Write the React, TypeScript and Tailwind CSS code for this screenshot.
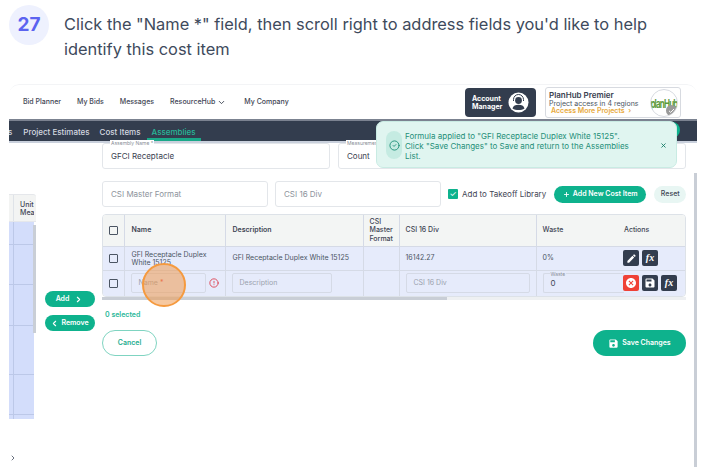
import { ChevronDown, ChevronLeft, ChevronRight, CircleAlert, CircleCheck, Plus, X } from "lucide-react";
import { MdCancel, MdEdit, MdSave } from "react-icons/md";

const leftRows = ["h-[23px]", "h-[40px]", "h-[41px]", "h-[49px]", "h-[40px]", "h-[4px]"];

function Field({ label, value, placeholder, className }: { label?: string; value?: string; placeholder?: string; className: string }) {
  return (
    <div className={`relative flex items-center border border-[#e3e6ea] rounded-[3px] bg-white pl-2 text-[8px] ${className}`}>
      {label && <span className="absolute left-[7px] -top-[4px] bg-white px-px text-[5px] leading-[7px] text-[#8a8f98]">{label}</span>}
      <span className={value ? "text-[#3a4150]" : "text-[#8d939c]"}>{value ?? placeholder}</span>
    </div>
  );
}

function Placeholder({ children, className }: { children: React.ReactNode; className: string }) {
  return (
    <div className={`flex items-center h-[20px] pl-[7px] border border-[#d5dae6] rounded-[2px] text-[7px] text-[#9aa1ad] ${className}`}>{children}</div>
  );
}

function Square({ className = "" }: { className?: string }) {
  return <div className={`w-[9px] h-[9px] mx-auto border border-[#4b5563] rounded-[1px] ${className}`} />;
}

function ActionBtn({ children, red }: { children: React.ReactNode; red?: boolean }) {
  return (
    <div className={`flex items-center justify-center w-[16px] h-[16px] rounded-[2px] text-white ${red ? "bg-[#ef4136]" : "bg-[#333d4e]"}`}>
      {children}
    </div>
  );
}

function Fx() {
  return <span className="font-['Liberation_Serif',serif] italic font-bold text-[10px] leading-none">fx</span>;
}

export default function App() {
  return (
    <div className="relative w-[707px] h-[475px] overflow-hidden bg-white font-['Inter',sans-serif]">
      <div className="flex h-[84px] pt-[5px] pl-[9px]">
        <div className="flex items-center justify-center w-[40px] h-[40px] rounded-full bg-[#eef1fe] text-[19px] font-bold text-[#5b63f0] shrink-0">27</div>
        <p className="ml-[15px] mt-[7px] w-[600px] text-[16.4px] leading-[25px] text-[#3e4a5c]">
          Click the "Name *" field, then scroll right to address fields you'd like to help identify this cost item
        </p>
      </div>

      <div className="relative ml-[9px] w-[688px] h-[383px] rounded-t-[10px] overflow-hidden">
        <div className="flex items-center h-[35px] pl-[14px] pr-[16px] border-t border-[#f3f4f6] rounded-t-[10px]">
          <div className="flex items-center pt-[1px] text-[7px] font-medium text-[#3f4654]">
            <span>Bid Planner</span>
            <span className="ml-[16px]">My Bids</span>
            <span className="ml-[16px]">Messages</span>
            <span className="ml-[16px] flex items-center gap-[2px]">ResourceHub <ChevronDown size={9} strokeWidth={2.5} /></span>
            <span className="ml-[18px]">My Company</span>
          </div>
          <div className="ml-auto flex items-center h-[29px] w-[71px] mt-[1px] pl-[7px] gap-[6px] rounded-[4px] bg-[#333d4e] text-white">
            <span className="text-[7px] leading-[8px] font-bold">Account<br />Manager</span>
            <svg width="21" height="21" viewBox="0 0 21 21" className="shrink-0">
              <circle cx="10.5" cy="10.5" r="10" fill="#fff" />
              <circle cx="10.5" cy="8.5" r="3.4" fill="#333d4e" />
              <path d="M5.500 9V7.500a5 5 0 0 1 10 0V9" fill="none" stroke="#333d4e" strokeWidth="1" />
              <path d="M4.500 16.500c.6-2.800 3-3.800 6-3.800s5.400 1 6 3.800c-3.200 2-8.800 2-12 0z" fill="#333d4e" />
            </svg>
          </div>
          <div className="relative flex items-center ml-[9px] w-[136px] h-[31px] pl-[3px] mt-[1px] border border-[#d7dae0] rounded-[3px]">
            <div className="flex flex-col">
              <span className="text-[8px] leading-[9px] font-semibold text-[#3a4150]">PlanHub Premier</span>
              <span className="text-[7px] leading-[7.500px] text-[#4b5563]">Project access in 4 regions</span>
              <span className="pl-[2px] text-[7px] leading-[7.500px] font-semibold text-[#e7a93c]">Access More Projects &nbsp;›</span>
            </div>
            <div className="relative ml-auto mr-[2px] flex items-center justify-center w-[28px] h-[28px] rounded-full border border-[#d7dae0] overflow-hidden">
              <span className="text-[8px] leading-none font-bold tracking-[-0.8px] scale-y-150 text-[#5c9a3c]">planHub</span>
              <svg width="11" height="11" viewBox="0 0 11 11" className="absolute right-0 bottom-0">
                <circle cx="5.5" cy="5.5" r="5.5" fill="#9a9a9a" />
                <path d="M3 5.800l1.700 1.600L8 4" fill="none" stroke="#fff" strokeWidth="1" />
              </svg>
            </div>
          </div>
        </div>

        <div className="flex items-end h-[22px] border-t-2 border-[#7b8290] bg-[#333d4e] text-[8px] font-medium text-[#d5d9e0]">
          <span className="pb-[3px] -ml-[1px] text-[8px]">s</span>
          <span className="pb-[3px] ml-[11px]">Project Estimates</span>
          <span className="pb-[3px] ml-[10px]">Cost Items</span>
          <span className="ml-[6px] h-[19px] px-[5px] flex items-center pt-[3px] border-b-[3px] border-[#1aa888] text-[#27b899]">Assemblies</span>
          <span className="ml-auto mr-[17px] mb-[3px] w-[10px] h-[16px] rounded-r-full bg-[#0eb28d]" />
        </div>

        <div className="flex h-[326px] border-t-2 border-[#c9d0dc]">
          <div className="relative w-[27px] shrink-0 pt-[51px]">
            <div className="flex h-[28px] rounded-tr-[3px] border-y border-[#e5e7eb] bg-[#f3f4f3]">
              <div className="w-[5px] border-r border-[#dfe3e8]" />
              <span className="pl-[6px] pt-[6px] w-[20px] overflow-hidden whitespace-nowrap text-[7px] leading-[8px] font-medium text-[#3f4654]">Unit<br />Mea</span>
            </div>
            {leftRows.map((h, i) => (
              <div key={i} className={`flex ${h} bg-[#d3ddfb] ${i < 5 ? "border-b border-[#bcc8e8]" : ""} w-[25px]`}>
                <div className="w-[5px] border-r border-[#bcc8e8]" />
              </div>
            ))}
            <div className="absolute right-0 top-[82px] w-[3px] h-[108px] bg-[#c9ced6]" />
            <ChevronRight size={8} className="absolute left-0 bottom-[5px] text-[#6b7280]" strokeWidth={3} />
          </div>

          <div className="flex flex-col w-[66px] shrink-0 items-center pt-[148px] gap-[8px] pl-[1px]">
            <div className="flex items-center justify-center gap-[5px] w-[50px] h-[16px] rounded-full bg-[#0eb28d] text-white text-[7px] font-semibold">Add <ChevronRight size={9} strokeWidth={3} /></div>
            <div className="flex items-center justify-center gap-[2px] w-[50px] h-[16px] rounded-full bg-[#0eb28d] text-white text-[7px] font-semibold"><ChevronLeft size={9} strokeWidth={3} /> Remove</div>
          </div>

          <div className="w-[584px] shrink-0">
            <div className="flex gap-[8px] h-[26px]">
              <Field label="Assembly Name *" value="GFCI Receptacle" className="w-[228px]" />
              <Field label="Measurement" value="Count" className="w-[348px]" />
            </div>
            <div className="flex items-center mt-[12px] h-[26px]">
              <Field placeholder="CSI Master Format" className="w-[166px] h-[26px] shrink-0" />
              <Field placeholder="CSI 16 Div" className="w-[166px] h-[26px] ml-[7px] shrink-0" />
              <div className="ml-[7px] flex items-center justify-center w-[10px] h-[10px] rounded-[1px] bg-[#0eb28d] text-white text-[8px] leading-none shrink-0">✓</div>
              <span className="ml-[4px] whitespace-nowrap text-[8px] text-[#3f4654]">Add to Takeoff Library</span>
              <div className="ml-[8px] flex items-center justify-center gap-[3px] w-[92px] h-[17px] rounded-full bg-[#0eb28d] text-white text-[7px] font-semibold shrink-0"><Plus size={7} strokeWidth={3} /> Add New Cost Item</div>
              <div className="ml-[8px] flex items-center justify-center w-[32px] h-[17px] rounded-full bg-[#e8f6f3] text-[7px] font-medium text-[#3f4654] shrink-0">Reset</div>
            </div>

            <div className="mt-[7px] rounded-[4px] border border-[#dde2e8] overflow-hidden">
              <table className="w-[582px] table-fixed border-collapse text-[7px] text-[#4b5563]">
                <colgroup>
                  <col className="w-[21px]" />
                  <col className="w-[101px]" />
                  <col className="w-[138px]" />
                  <col className="w-[36px]" />
                  <col className="w-[137px]" />
                  <col className="w-[88px]" />
                  <col className="w-[61px]" />
                </colgroup>
                <thead>
                  <tr className="h-[31px] bg-[#f3f5f4] text-left font-semibold text-[#3f4654] border-b border-[#d5dae6]">
                    <th className="border-r border-[#d5dae6]"><Square /></th>
                    <th className="pl-[7px] font-semibold border-r border-[#d5dae6]">Name</th>
                    <th className="pl-[7px] font-semibold border-r border-[#d5dae6]">Description</th>
                    <th className="pl-[6px] font-medium leading-[8.500px] border-r border-[#d5dae6]">CSI Master Format</th>
                    <th className="pl-[6px] font-medium border-r border-[#d5dae6]">CSI 16 Div</th>
                    <th className="pl-[6px] font-medium">Waste</th>
                    <th className="font-medium">Actions</th>
                  </tr>
                </thead>
                <tbody className="bg-[#e6ebfb]">
                  <tr className="h-[24px] border-b border-[#d5dae6]">
                    <td className="border-r border-[#d5dae6]"><Square /></td>
                    <td className="pl-[7px] leading-[8.300px] border-r border-[#d5dae6]"><div className="h-[22px] pt-[4px] overflow-visible">GFI Receptacle Duplex White 15125</div></td>
                    <td className="pl-[7px] border-r border-[#d5dae6]">GFI Receptacle Duplex White 15125</td>
                    <td className="border-r border-[#d5dae6]" />
                    <td className="pl-[6px] border-r border-[#d5dae6]">16142.27</td>
                    <td className="pl-[6px]">0%</td>
                    <td>
                      <div className="flex gap-[3px] -ml-px">
                        <ActionBtn><MdEdit size={11} /></ActionBtn>
                        <ActionBtn><Fx /></ActionBtn>
                      </div>
                    </td>
                  </tr>
                  <tr className="h-[26px]">
                    <td className="border-r border-[#d5dae6]"><Square /></td>
                    <td className="pl-[6px] border-r border-[#d5dae6]">
                      <div className="flex items-center gap-[3px]">
                        <Placeholder className="w-[75px]">Name&nbsp;<span className="text-[#e5484d]">*</span></Placeholder>
                        <CircleAlert size={10} className="text-[#dc3545]" />
                      </div>
                    </td>
                    <td className="pl-[6px] border-r border-[#d5dae6]"><Placeholder className="w-[100px]">Description</Placeholder></td>
                    <td className="border-r border-[#d5dae6]" />
                    <td className="pl-[6px] border-r border-[#d5dae6]"><Placeholder className="w-[124px]">CSI 16 Div</Placeholder></td>
                    <td className="pl-[6px]">
                      <div className="relative flex items-center h-[20px] pl-[7px] border-y border-l border-[#d5dae6] rounded-l-[2px] text-[8px] text-[#3f4654]">
                        <span className="absolute left-[6px] -top-[3px] px-px bg-[#e6ebfb] text-[5px] leading-[6px] text-[#8a8f98]">Waste</span>
                        0
                      </div>
                    </td>
                    <td>
                      <div className="flex gap-[3px] -ml-[1px]">
                        <ActionBtn red><MdCancel size={12} /></ActionBtn>
                        <ActionBtn><MdSave size={12} /></ActionBtn>
                        <ActionBtn><Fx /></ActionBtn>
                      </div>
                    </td>
                  </tr>
                </tbody>
              </table>
            </div>
            <div className="h-[3px] bg-[#eef0f2]">
              <div className="w-[345px] h-[3px] bg-[#c9ced6]" />
            </div>

            <p className="mt-[10px] ml-[3px] text-[7px] leading-[10px] font-semibold text-[#2bb89a]">0 selected</p>
            <div className="flex justify-between mt-[10px]">
              <div className="flex items-center justify-center w-[55px] h-[26px] rounded-full border border-[#7fd4c1] text-[7px] font-semibold text-[#1fae90]">Cancel</div>
              <div className="flex items-center justify-center gap-[3px] w-[93px] h-[26px] rounded-full bg-[#0eb28d] text-[7px] font-semibold text-white"><MdSave size={11} /> Save Changes</div>
            </div>
          </div>
          <div className="ml-[8px] mt-[30px] w-[3px] bg-[#c9ced6]" />
        </div>

        <div className="absolute left-[367px] top-[37px] flex items-start w-[301px] h-[47px] pl-[9px] pt-[9px] rounded-[7px] border border-[#c9ebe3] bg-[#e0f5f0] text-[8px] leading-[10px] text-[#1f8f78]">
          <div className="flex items-center justify-center w-[16px] h-[28px] rounded-full bg-[#c5ebe2] shrink-0">
            <CircleCheck size={11} strokeWidth={2} />
          </div>
          <span className="ml-[3px] w-[230px]">Formula applied to "GFI Receptacle Duplex White 15125". Click "Save Changes" to Save and return to the Assemblies List.</span>
          <X size={7} strokeWidth={3} className="absolute right-[9px] top-[20px] text-[#157a66]" />
        </div>

        <div className="absolute left-[133px] top-[179px] w-[44px] h-[44px] rounded-full border-2 border-[#f59a3f] bg-[#ef9a52]/55" />
      </div>
    </div>
  );
}
